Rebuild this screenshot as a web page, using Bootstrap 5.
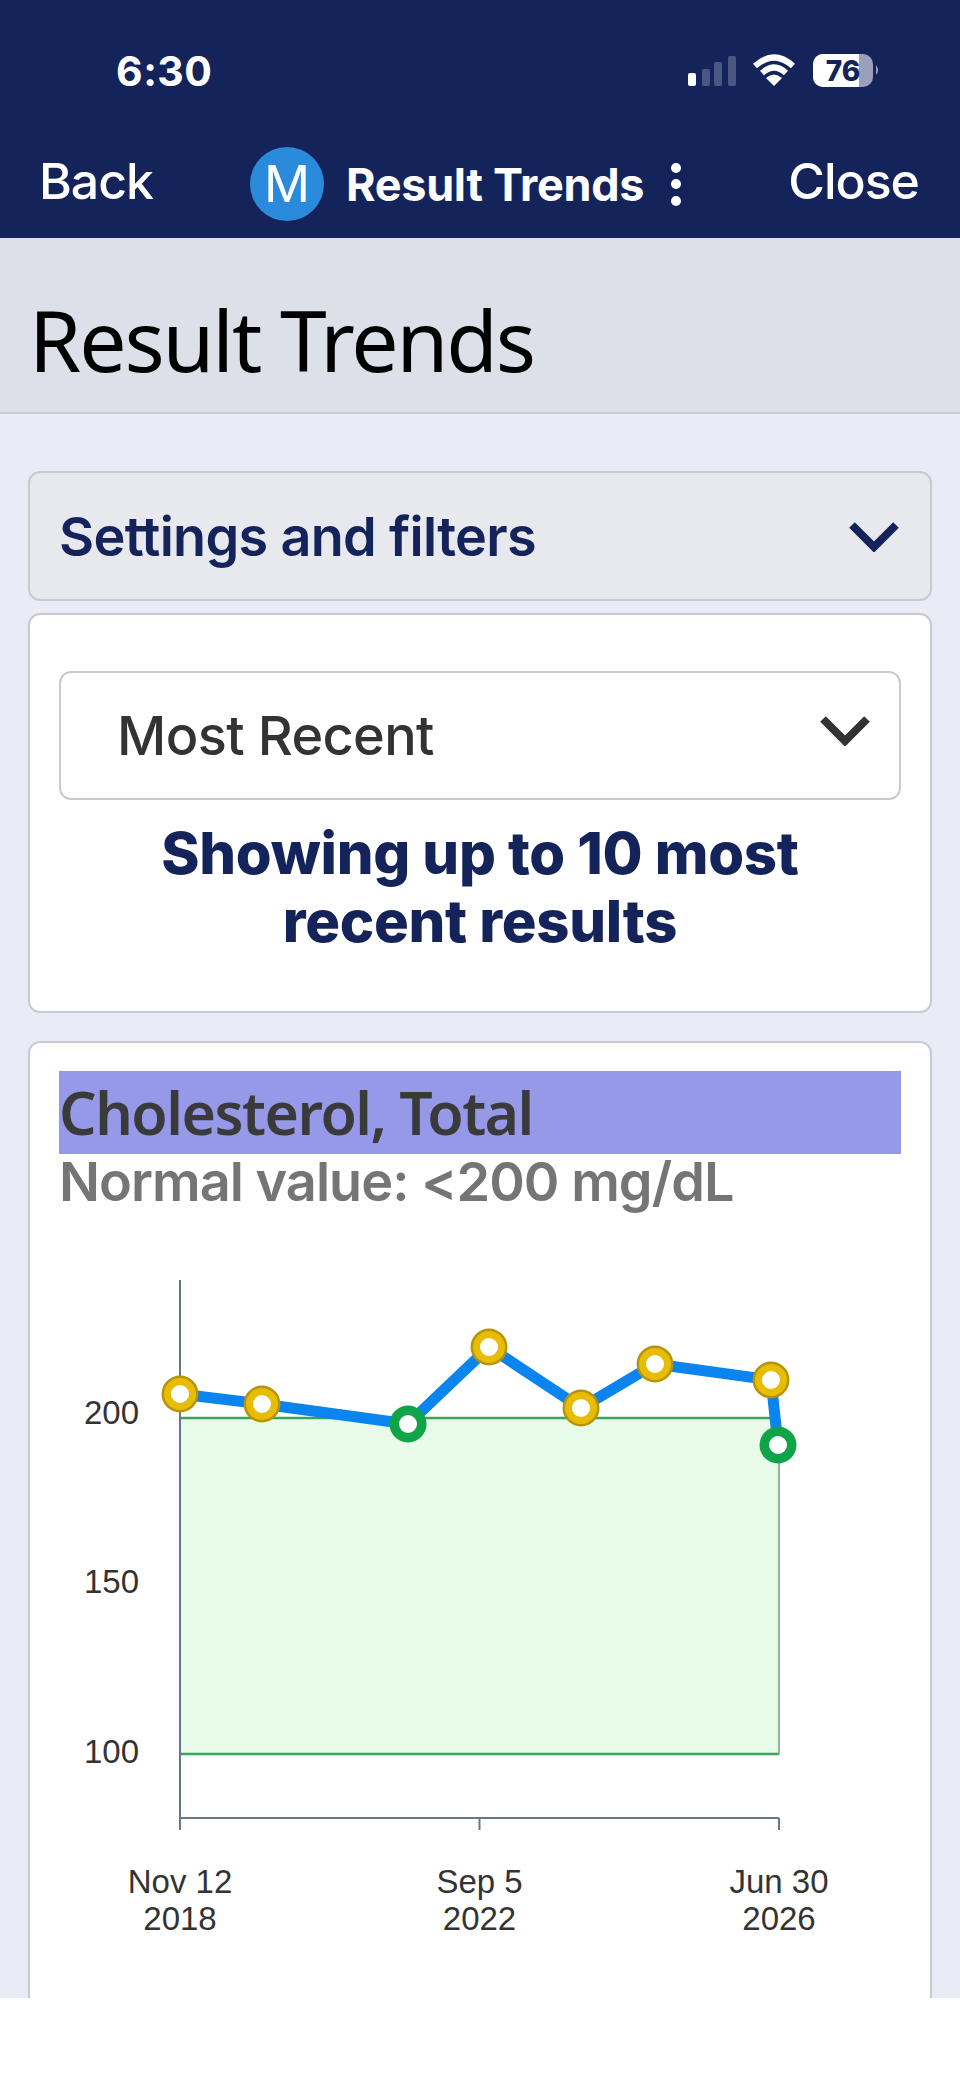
<!DOCTYPE html>
<html lang="en">
<head>
  <meta charset="UTF-8">
  <meta name="viewport" content="width=device-width, initial-scale=1.0">
  <title>Result Trends</title>
  <link href="https://cdn.jsdelivr.net/npm/bootstrap@5.3.0/dist/css/bootstrap.min.css" rel="stylesheet">
  <style>
    html, body { background: #fff; }
    body { font-family: "Inter", "Liberation Sans", sans-serif; }
    .app-screen { height: 1998px; overflow: hidden; background: #e9ebf6; }
    .top-band { height: 238px; background: #14245a; color: #fff; }
    .status-row { height: 130px; padding: 48px 80px 0 116px; }
    .clock { font-size: 41px; font-weight: 700; line-height: 46px; letter-spacing: .5px; }
    .nav-row { height: 108px; padding: 0 41px 0 39px; }
    .nav-link-text { font-size: 50px; font-weight: 500; letter-spacing: -1px; line-height: 1; margin-bottom: 6px; }
    .avatar-dot { width: 74px; height: 74px; background: #2a8bdc; font-size: 51px; margin-right: 22px; }
    .nav-center { margin-right: 10px; }
    .nav-title { font-size: 45px; font-weight: 700; letter-spacing: -.3px; line-height: 1; }
    .kebab { margin-left: 27px; gap: 6.5px; }
    .kebab span { width: 10px; height: 10px; background: #fff; }
    .sub-head { height: 176px; background: #dee0e9; border-bottom: 2px solid #c9cad0; padding: 30px 0 0 29px; }
    .sub-title { font-family: "Noto Sans", sans-serif; font-size: 84px; font-weight: 400; color: #000; letter-spacing: -2.1px; margin: 0; line-height: 1; }
    .content-pad { padding: 57px 28px 0; }
    .panel-box { border: 2px solid #c9cad0; border-radius: 12px; background: #fff; }
    .settings-box { height: 130px; background: #e8e9ef; padding: 0 30px 0 29px; margin-bottom: 12px; }
    .settings-label { font-size: 54px; font-weight: 600; color: #14245a; letter-spacing: -.7px; }
    .filter-box { height: 400px; padding: 56px 29px 0; margin-bottom: 28px; }
    .range-select { height: 129px; border: 2px solid #c9cad0; border-radius: 12px; padding: 0 0 0 56px; background-image: none; font-size: 54px; font-weight: 500; color: #333; letter-spacing: -.6px; }
    .range-chev { position: absolute; right: 30px; top: 43px; }
    .showing-note { font-size: 58px; font-weight: 800; line-height: 68px; color: #14245a; margin-top: 19px; letter-spacing: -.3px; }
    .chart-box { height: 1100px; padding: 28px 29px 0; }
    .test-name { height: 83px; background: #9599e8; color: #3a3a3a; font-family: "Noto Sans", sans-serif; font-size: 59px; font-weight: 600; letter-spacing: -1.5px; line-height: 83px; }
    .test-range { font-size: 54px; font-weight: 600; color: #757575; line-height: 56px; letter-spacing: -.95px; }
    .chart-wrap { position: relative; height: 788px; }
    .trend-chart { display: block; position: absolute; left: -59px; top: 0; }
    .trend-chart text { font-family: "Liberation Sans", sans-serif; font-size: 33px; fill: #333; }
  </style>
</head>
<body>
  <div class="app-screen">
    <div class="top-band">
      <div class="status-row d-flex justify-content-between align-items-start">
        <span class="clock">6:30</span>
        <svg width="200" height="40" viewBox="0 0 200 40">
          <rect x="8" y="25" width="8" height="13" rx="2" fill="#fff"/>
          <rect x="22" y="21" width="8" height="17" rx="2" fill="#4a5782"/>
          <rect x="34" y="14" width="8" height="24" rx="2" fill="#4a5782"/>
          <rect x="48" y="8" width="8" height="30" rx="2" fill="#4a5782"/>
          <path d="M75 18 Q94 1 113 18" fill="none" stroke="#fff" stroke-width="6"/>
          <path d="M82 25 Q94 14 106 25" fill="none" stroke="#fff" stroke-width="6"/>
          <path d="M94 38 L86 30 Q94 23 102 30 Z" fill="#fff"/>
          <rect x="133" y="6" width="60" height="33" rx="10" fill="#9a9fbb"/>
          <path d="M143 6 H179 V39 H143 A10 10 0 0 1 133 29 V16 A10 10 0 0 1 143 6 Z" fill="#fff"/>
          <path d="M196 17 Q200 22 196 27 Z" fill="#9a9fbb"/>
          <text x="163" y="33" text-anchor="middle" font-family="Inter, sans-serif" font-size="28" font-weight="800" fill="#14245a">76</text>
        </svg>
      </div>
      <div class="nav-row d-flex justify-content-between align-items-center">
        <span class="nav-link-text">Back</span>
        <div class="nav-center d-flex align-items-center">
          <span class="avatar-dot rounded-circle d-flex align-items-center justify-content-center">M</span>
          <span class="nav-title">Result Trends</span>
          <span class="kebab d-flex flex-column"><span class="rounded-circle"></span><span class="rounded-circle"></span><span class="rounded-circle"></span></span>
        </div>
        <span class="nav-link-text">Close</span>
      </div>
    </div>

    <div class="sub-head d-flex align-items-center">
      <h1 class="sub-title">Result Trends</h1>
    </div>

    <div class="content-pad">
      <div class="panel-box settings-box d-flex justify-content-between align-items-center">
        <span class="settings-label">Settings and filters</span>
        <svg width="52" height="32" viewBox="0 0 52 32"><path d="M4 5 L26 27 L48 5" fill="none" stroke="#14245a" stroke-width="8"/></svg>
      </div>

      <div class="panel-box filter-box">
        <div class="position-relative">
          <select class="form-select range-select"><option>Most Recent</option></select>
          <svg class="range-chev" width="52" height="32" viewBox="0 0 52 32"><path d="M4 5 L26 27 L48 5" fill="none" stroke="#333" stroke-width="8"/></svg>
        </div>
        <div class="showing-note text-center">Showing up to 10 most<br>recent results</div>
      </div>

      <div class="panel-box chart-box">
        <div class="test-name">Cholesterol, Total</div>
        <div class="test-range">Normal value: &lt;200 mg/dL</div>
        <div class="chart-wrap">
          <svg class="trend-chart" id="trendChart" width="960" height="788"></svg>
        </div>
      </div>
    </div>
  </div>

  <script>
    // x is already page pixels (svg starts at the left edge), y is shifted by the svg top
    const offY = 1210;
    const points = [
      [180, 1394, 'high'], [262, 1404, 'high'], [408, 1424, 'ok'], [489, 1347, 'high'],
      [581, 1408, 'high'], [655, 1364, 'high'], [771, 1380, 'high'], [778, 1445, 'ok']
    ];
    const sy = y => y - offY;
    let svg = '';
    svg += `<rect x="180" y="${sy(1418)}" width="599" height="336" fill="#e8fae8"/>`;
    svg += `<path d="M180 ${sy(1418)}H779M180 ${sy(1754)}H779" stroke="#3aa35f" stroke-width="2.5" fill="none"/>`;
    svg += `<path d="M779 ${sy(1418)}V${sy(1754)}" stroke="#5fa97c" stroke-width="1.5" fill="none"/>`;
    svg += `<path d="M180 ${sy(1280)}V${sy(1830)}M180 ${sy(1818)}H779M479.5 ${sy(1818)}V${sy(1830)}M779 ${sy(1818)}V${sy(1830)}" stroke="#64788a" stroke-width="2" fill="none"/>`;
    [['200', 1424], ['150', 1593], ['100', 1763]].forEach(([t, y]) => {
      svg += `<text x="139" y="${sy(y)}" text-anchor="end">${t}</text>`;
    });
    [[180, 'Nov 12', '2018'], [479.5, 'Sep 5', '2022'], [779, 'Jun 30', '2026']].forEach(([x, a, b]) => {
      svg += `<text x="${x}" y="${sy(1893)}" text-anchor="middle">${a}</text>`;
      svg += `<text x="${x}" y="${sy(1930)}" text-anchor="middle">${b}</text>`;
    });
    svg += `<polyline points="${points.map(p => p[0] + ',' + sy(p[1])).join(' ')}" fill="none" stroke="#0a84ee" stroke-width="11" stroke-linejoin="round"/>`;
    points.forEach(p => {
      const cx = p[0], cy = sy(p[1]);
      if (p[2] === 'high') {
        svg += `<circle cx="${cx}" cy="${cy}" r="18.5" fill="#b8930a"/><circle cx="${cx}" cy="${cy}" r="16" fill="#e6bd00"/><circle cx="${cx}" cy="${cy}" r="9" fill="#fff"/>`;
      } else {
        svg += `<circle cx="${cx}" cy="${cy}" r="18.5" fill="#0fa447"/><circle cx="${cx}" cy="${cy}" r="9" fill="#fff"/>`;
      }
    });
    document.getElementById('trendChart').innerHTML = svg;
  </script>
  <script src="https://cdn.jsdelivr.net/npm/bootstrap@5.3.0/dist/js/bootstrap.bundle.min.js"></script>
</body>
</html>
